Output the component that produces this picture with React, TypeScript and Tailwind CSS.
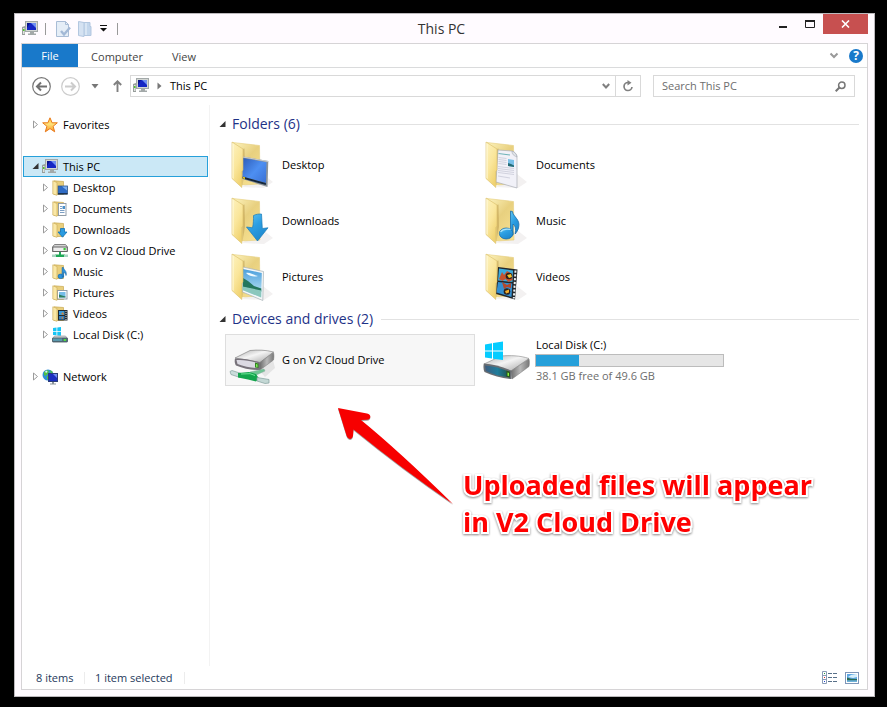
import type { ReactNode } from "react";

type Kind = "desktop" | "documents" | "downloads" | "music" | "pictures" | "videos";

function ComputerIcon() {
  return (
    <svg width="16" height="16" viewBox="0 0 16 16" aria-hidden="true">
      <path d="M3 0h13v11H3z" fill="#a3a9a9" />
      <path d="M4 1h11v9H4z" fill="#d3d7d4" />
      <rect x="5" y="2" width="9" height="7" fill="#1526c4" />
      <path d="M9 2h5v5z" fill="#6f8ff2" />
      <path d="M5 2h3L5 7z" fill="#08128a" />
      <path d="M8 11h4v1.500h2V14H6v-1.500h2z" fill="#a3a9a9" />
      <path d="M0 6l3-1v9H0z" fill="#989e9c" />
      <path d="M1 7h1.500v6H1z" fill="#dfe3df" />
      <rect x="1" y="8" width="1.500" height="2" fill="#4fc52c" />
    </svg>
  );
}

function StarIcon() {
  return (
    <svg width="16" height="16" viewBox="0 0 16 16" aria-hidden="true">
      <defs>
        <linearGradient id="star" x1="0" y1="0" x2="0" y2="1">
          <stop offset="0" stopColor="#ffc83a" />
          <stop offset="0.450" stopColor="#ffe27a" />
          <stop offset="1" stopColor="#f9951f" />
        </linearGradient>
      </defs>
      <path
        d="M8 .8l2.100 5h5.200l-4.200 3.500 1.600 5.500L8 11.600l-4.700 3.200 1.600-5.500L.7 5.800h5.200z"
        fill="url(#star)"
        stroke="#e8791a"
        strokeWidth="1"
        strokeLinejoin="round"
      />
    </svg>
  );
}

function NetworkIcon() {
  return (
    <svg width="16" height="16" viewBox="0 0 16 16" aria-hidden="true">
      <circle cx="6" cy="6" r="5.500" fill="#2f8fd8" />
      <path d="M2 3l3-2 2 1-1 3-3 2-1-1zM5 7l3 1-1 3-2-1zM8 1l3 2-2 2z" fill="#4fbf47" />
      <path d="M3 2.500L5 1.500 5.500 3 4 4z" fill="#d8f4fb" />
      <rect x="6.500" y="4.500" width="9" height="8" fill="#1a2fc0" stroke="#2b3d78" />
      <path d="M11 5h4v4z" fill="#6f8cf0" />
      <path d="M10 13h2v1.500h2v1H8v-1h2z" fill="#8a9399" />
    </svg>
  );
}

function CloudDriveSmall() {
  return (
    <svg width="16" height="16" viewBox="0 0 16 16" aria-hidden="true">
      <path d="M2.500 1.500h11l2 2.500v4.500h-15V4z" fill="#d3d3d3" stroke="#777" strokeWidth="0.900" />
      <path d="M.8 4h14.400v4.500H.8z" fill="#ededed" stroke="#666" strokeWidth="1" />
      <rect x="11.500" y="5" width="2.200" height="2.200" fill="#3acb3a" />
      <path d="M7 9h2v2.500h4V14H3v-2.500h4z" fill="#1fa957" />
      <path d="M0 11.500h4V14H0zM12 11.500h4V14h-4z" fill="#a9d4c2" />
    </svg>
  );
}

function LocalDiskSmall() {
  return (
    <svg width="16" height="16" viewBox="0 0 16 16" aria-hidden="true">
      <path d="M1 1l3.500-.5v3.500H1zM5.300.4L9 0v4H5.300zM1 4.800h3.500v3.500L1 8zM5.300 4.800H9v4l-3.700-.4z" fill="#16c5f5" />
      <path d="M2.500 9h11l2 2.500H.5z" fill="#cfd3d6" stroke="#8b8f92" strokeWidth="0.600" />
      <rect x="0.500" y="11" width="15" height="4" rx="0.500" fill="#54707c" stroke="#42555f" strokeWidth="0.800" />
      <path d="M1 11.500h9v2.500H1z" fill="#5a98ad" />
      <rect x="11.800" y="12" width="2.200" height="2" fill="#4de03e" />
    </svg>
  );
}

const smallOverlays: Record<Kind, ReactNode> = {
  desktop: (
    <>
      <rect x="6" y="6" width="9.500" height="8" fill="#2f6bc4" stroke="#345a88" strokeWidth="0.800" />
      <path d="M10 6.500h5v4z" fill="#7eb0ef" />
      <path d="M6 13h9.500v1.500H6z" fill="#1c3350" />
    </>
  ),
  documents: (
    <>
      <rect x="6.500" y="2.500" width="7.500" height="12" fill="#fff" stroke="#8795a3" strokeWidth="0.900" />
      <path d="M8 5.500h2M8 7.500h2M8 9.500h4.500M8 11.500h4.500" stroke="#6d94bd" strokeWidth="0.900" />
      <rect x="10.500" y="5" width="2.500" height="3" fill="#4b8fc9" />
    </>
  ),
  downloads: <path d="M8.500 6.500h4V10H15l-4.500 5.200L6 10h2.500z" fill="#2a9be0" stroke="#1272b8" strokeWidth="0.800" />,
  music: (
    <>
      <ellipse cx="8.800" cy="12.300" rx="2.800" ry="2.300" fill="#2d93de" stroke="#17649f" strokeWidth="0.600" />
      <path d="M10.100 12.500V3.500h1.300c.2 2.500 4 3.500 2.600 8-.2-2-1-2.600-2.400-3v4z" fill="#2d93de" stroke="#17649f" strokeWidth="0.600" />
    </>
  ),
  pictures: (
    <>
      <rect x="5.500" y="5.500" width="9.500" height="8.500" fill="#fff" stroke="#8795a3" strokeWidth="0.900" />
      <rect x="7" y="7" width="6.500" height="5.500" fill="#76bde8" />
      <path d="M7 12.500V9.500l3 1 3.500 1v1z" fill="#2c7f5e" />
    </>
  ),
  videos: (
    <>
      <rect x="6" y="4" width="9.500" height="10.500" fill="#222b33" />
      <rect x="7" y="5" width="5.500" height="4" fill="#3b9bd9" />
      <rect x="7" y="10" width="5.500" height="3.500" fill="#397fba" />
      <path d="M14 5v9" stroke="#d8e2ea" strokeDasharray="1 1" />
      <path d="M9 8l2-2 1 3zM9 12l2-1v2z" fill="#d98332" />
    </>
  ),
};

function FolderSmall({ kind }: { kind: Kind }) {
  return (
    <svg width="16" height="16" viewBox="0 0 16 16" aria-hidden="true">
      <path d="M2 .8l9.500.7v13H2z" fill="#e9cf7d" stroke="#c9a951" strokeWidth="0.700" />
      {smallOverlays[kind]}
      <path d="M.8.800L5 2.500v12.800L.8 14z" fill="#fae8a6" stroke="#cdb060" strokeWidth="0.700" />
    </svg>
  );
}

const largeOverlays: Record<Kind, ReactNode> = {
  desktop: (
    <>
      <path d="M14 15.500L39.300 20l-.8 26L13.500 38z" fill="#8d9499" />
      <path d="M14 17l23.500 4.200-.6 20.800L13.500 35.500z" fill="url(#screen)" />
      <path d="M13.500 35.500l23.400 6.500-.1 2L13.500 37.500z" fill="#14263b" />
      <path d="M14 35.700l2 .6v1.800l-2-.6z" fill="#e3c71e" />
      <path d="M14 15.500L39.300 20l-.1 1L14 16.600z" fill="#c9cdd0" />
    </>
  ),
  documents: (
    <>
      <path d="M15 9l14 1c3 1 5 3.500 5 6v31L13 41z" fill="#f1f1f8" stroke="#a9adb5" strokeWidth="0.700" />
      <path d="M29 10c0 2 0 4 5 6-.5-3-2-5-5-6z" fill="#dfe3e8" stroke="#9ca1aa" strokeWidth="0.500" />
      <path d="M15.500 12.500l11.500 1.500" stroke="#6fb3b8" strokeWidth="1.200" />
      <path
        d="M15.500 16.500l8 1M15.500 18.500l8 1M15.500 20.500l8 1M15.500 22.500l8 1M15 25.500l16 2M15 27.500l16 2M15 29.500l16 2M15 31.500l16 2M15 35l12 2"
        stroke="#c3c4d3"
        strokeWidth="0.700"
      />
      <path d="M25 18l6 1v7l-6-1z" fill="#79c0e8" />
      <path d="M25 25v-3l3 1 3 1.500V26z" fill="#266b74" />
    </>
  ),
  downloads: (
    <path
      d="M24.500 18.500c3-1.500 5.500-1.500 8-1.500l.8 14.500 5.700-.7L28.500 44 17.500 30l6 .8c1-4 1-8 1-12.300z"
      fill="url(#blue)"
      stroke="#197ab8"
      strokeWidth="0.700"
    />
  ),
  music: (
    <>
      <path d="M27.500 37V14l2 .6c.5 5 8 8 6.200 15.400-.5 3-2 5-3.500 7 .8-5 .5-8-2.200-10v11z" fill="url(#blue)" stroke="#1a6caa" strokeWidth="0.800" />
      <ellipse cx="23.200" cy="36.500" rx="6.800" ry="5.500" fill="url(#blue)" stroke="#1a6caa" strokeWidth="0.800" />
      <path d="M17.500 35c3-4 7-3 10-2.500" stroke="#a9e3fa" strokeWidth="1.200" fill="none" />
    </>
  ),
  pictures: (
    <>
      <path d="M14 14l20.500 4.500-.7 29L13.500 39z" fill="#f5f8f9" stroke="#a5b0b5" strokeWidth="0.700" />
      <path d="M14 16l18.800 4-.6 24.500L13.500 37z" fill="url(#sky)" />
      <path d="M14 25l5 3 6 5 7.300 2.500v3L14 34z" fill="#24765d" />
      <path d="M13.500 33.500l18.800 4-.1 7L13.500 37z" fill="#8bc7bd" />
      <path d="M17 20c4-1 7 2 12 3-3 1-8 1-12-3z" fill="#effaff" />
    </>
  ),
  videos: (
    <>
      <path d="M15 14l19.500 2.500L32 46.500 13 41z" fill="#22262a" />
      <path d="M16 15.500l14 2-.5 11.500L15 27.500z" fill="#3cabdd" />
      <path d="M15 29l14.300 1.500L28.500 44 13.500 39.500z" fill="#348fd0" />
      <path d="M16 26l3-7 2 3 3-4 5 3 .5 6-4 2-3-3-3 2z" fill="#c6522d" />
      <circle cx="26" cy="23" r="3.300" fill="#2d211d" />
      <path d="M24 22l4-1 1 3-3 1z" fill="#f4c42b" />
      <path d="M19 29l5 3 4-2v5l-4-1-3 2z" fill="#b5482b" />
      <circle cx="24" cy="38.500" r="3.300" fill="#2d211d" />
      <path d="M22 38l4-1.500v3l-3 1z" fill="#f0ad2b" />
      <path d="M32.500 17.500L30.800 45.500" stroke="#eef1f2" strokeWidth="2" strokeDasharray="2.200 1.600" />
    </>
  ),
};

function FolderLarge({ kind }: { kind: Kind }) {
  return (
    <svg className="shrink-0" width="48" height="48" viewBox="0 0 48 48" aria-hidden="true">
      <path d="M13 46l22 1 9-6-10-8z" fill="#f3f1f1" />
      <path d="M4 1.500L30.500 4.500 31 43l-18 1z" fill="url(#back)" stroke="#e6cf7e" strokeWidth="0.600" />
      <path d="M13.500 8l2-.5L16 30l-2.500 14z" fill="#b99a4c" opacity="0.500" />
      {largeOverlays[kind]}
      <path d="M3 1l11 7v21l-1.200 1.500v16L3 37.500z" fill="url(#flap)" stroke="#d9bd68" strokeWidth="0.600" />
      <path d="M3.500 2v35l1 1V3z" fill="#fffbe0" />
    </svg>
  );
}

function IconGradients() {
  return (
    <svg className="absolute" width="0" height="0" aria-hidden="true">
      <defs>
        <linearGradient id="back" x1="0" y1="0" x2="0.700" y2="1">
          <stop offset="0" stopColor="#fdf3bd" />
          <stop offset="0.500" stopColor="#e8d07f" />
          <stop offset="1" stopColor="#f6df8f" />
        </linearGradient>
        <linearGradient id="flap" x1="0" y1="0" x2="0.600" y2="1">
          <stop offset="0" stopColor="#fdf2bf" />
          <stop offset="0.550" stopColor="#fae69b" />
          <stop offset="1" stopColor="#f0d270" />
        </linearGradient>
        <linearGradient id="screen" x1="0" y1="0" x2="1" y2="0.900">
          <stop offset="0" stopColor="#2e5db8" />
          <stop offset="0.550" stopColor="#4d8ff2" />
          <stop offset="1" stopColor="#3c73d6" />
        </linearGradient>
        <linearGradient id="blue" x1="0" y1="0" x2="0.600" y2="1">
          <stop offset="0" stopColor="#5fc6f2" />
          <stop offset="0.500" stopColor="#2c9ee2" />
          <stop offset="1" stopColor="#1e88cd" />
        </linearGradient>
        <linearGradient id="sky" x1="0" y1="0" x2="0" y2="1">
          <stop offset="0" stopColor="#4b9fdd" />
          <stop offset="1" stopColor="#c8ebf6" />
        </linearGradient>
        <linearGradient id="metal" x1="0" y1="0" x2="1" y2="1">
          <stop offset="0" stopColor="#a9a9a9" />
          <stop offset="0.450" stopColor="#f4f4f4" />
          <stop offset="1" stopColor="#a2a2a2" />
        </linearGradient>
        <linearGradient id="side" x1="0" y1="0" x2="1" y2="0">
          <stop offset="0" stopColor="#6f6f6f" />
          <stop offset="0.500" stopColor="#b9b9b9" />
          <stop offset="1" stopColor="#777" />
        </linearGradient>
        <linearGradient id="teal" x1="0" y1="0" x2="1" y2="0">
          <stop offset="0" stopColor="#3f5d80" />
          <stop offset="0.500" stopColor="#1f7d9c" />
          <stop offset="1" stopColor="#215147" />
        </linearGradient>
      </defs>
    </svg>
  );
}

function CloudDriveLarge() {
  return (
    <svg className="shrink-0" width="48" height="48" viewBox="0 0 48 48" aria-hidden="true">
      <path d="M30 34l14-10 2 8-10 9z" fill="#e4e4e4" />
      <path d="M6 22l15-7.500c8-.8 16-.5 23.500 1.500L31 26.500z" fill="url(#metal)" stroke="#777" strokeWidth="0.600" />
      <path d="M31 26.500L44.500 16.500c.6 2.500.5 5 0 7.500L31 34z" fill="url(#side)" stroke="#777" strokeWidth="0.500" />
      <path d="M6 22.500c8-.5 16 1 25 4V34c-8 0-16-1-24-4.500-1.500-2-1.500-5-1-7z" fill="#77727a" />
      <path d="M7.500 24c7-.5 14 .8 21.500 3.200v4.800c-7-.2-14-1.500-20.500-4z" fill="#dbd9e2" />
      <path d="M26 26.500l3.500 1v4.500l-3.500-.4z" fill="#34811f" />
      <path d="M27 28l1.500.4v2.500l-1.500-.2z" fill="#7df25c" />
      <path d="M21 36l14-3 1 2-11 5z" fill="#6fc493" stroke="#84a99b" strokeWidth="0.500" />
      <path d="M1 35.500l2-1 9 3-1 4-9-3z" fill="#c9dcda" stroke="#839f9c" strokeWidth="0.700" />
      <path d="M9 37l11-1 7 2 3 4.500-3 3-8-2-10-2z" fill="#12a54c" />
      <path d="M12 38l9-.3 5 1.800" stroke="#6be595" fill="none" />
      <path d="M28 41.500l12 2v3.500l-4 .5-8-2.500z" fill="#c4d8d5" stroke="#839f9c" strokeWidth="0.700" />
    </svg>
  );
}

function LocalDiskLarge() {
  return (
    <svg className="shrink-0" width="48" height="48" viewBox="0 0 48 48" aria-hidden="true">
      <path d="M1 28l17-8c9-.8 19-.5 28 2.500L28 35z" fill="url(#metal)" stroke="#8a8a8a" strokeWidth="0.600" />
      <path d="M28 35l18-12c.6 2.500.5 5 0 7.500L29 43z" fill="url(#side)" stroke="#777" strokeWidth="0.500" />
      <path d="M.8 27.500c9 .5 18 3 27.700 7.200V43C19 42.500 10 40 1.500 36 .3 33.500.3 30 .8 27.500z" fill="#696d72" />
      <path d="M2 29.500c8 .7 16 2.800 25 6.500v5.500C18 40.500 10 38.500 2.800 35z" fill="url(#teal)" />
      <path d="M23.500 34.500l3.500 1.200v5.700l-3.500-.6z" fill="#2d531f" />
      <path d="M24.500 36.500l1.500.5v3l-1.500-.3z" fill="#86f53f" />
      <path d="M2 8.500L9 7.200v7.300H2zM10 7l10-1.500v9H10zM2 15.500h7v7l-7-1zM10 15.500h10V24l-10-1.300z" fill="#05ccff" />
    </svg>
  );
}

function Collapsed() {
  return (
    <svg className="shrink-0" width="7" height="9" viewBox="0 0 7 9" aria-hidden="true">
      <path d="M1.500 1v7L5.500 4.500z" fill="#fff" stroke="#9c9c9c" />
    </svg>
  );
}

function Expanded() {
  return (
    <svg className="shrink-0" width="7" height="9" viewBox="0 0 7 9" aria-hidden="true">
      <path d="M6.500 1v6H.5z" fill="#333" />
    </svg>
  );
}

function TreeItem({
  label,
  icon,
  nested = false,
  selected = false,
}: {
  label: string;
  icon: ReactNode;
  nested?: boolean;
  selected?: boolean;
}) {
  return (
    <li>
      <button
        type="button"
        className={`flex h-[21px] w-full items-center gap-[3px] border text-left whitespace-nowrap ${nested ? "pl-[18px]" : "pl-2"} ${
          selected ? "border-[#26a0da] bg-[#cbe8f6]" : "border-transparent"
        }`}
      >
        {selected ? <Expanded /> : <Collapsed />}
        {icon}
        <span className="pl-0.5">{label}</span>
      </button>
    </li>
  );
}

function GroupHeading({ children }: { children: ReactNode }) {
  return (
    <div className="flex h-5 items-center gap-1.5 pl-[9px]">
      <Expanded />
      <h2 className="pr-0.5 text-sm text-[#1e3287]">{children}</h2>
      <div className="h-px flex-1 bg-[#e2e2e2]" />
    </div>
  );
}

function Tile({ label, icon }: { label: string; icon: ReactNode }) {
  return (
    <button type="button" className="flex h-[52px] items-center gap-1 border border-transparent px-[3px] text-left">
      {icon}
      <span className="pl-px">{label}</span>
    </button>
  );
}

const folders: { label: string; kind: Kind }[] = [
  { label: "Desktop", kind: "desktop" },
  { label: "Documents", kind: "documents" },
  { label: "Downloads", kind: "downloads" },
  { label: "Music", kind: "music" },
  { label: "Pictures", kind: "pictures" },
  { label: "Videos", kind: "videos" },
];

function TitleBar() {
  return (
    <header className="grid h-[29px] grid-cols-[1fr_auto_1fr] items-start pr-1.5">
      <div className="flex h-[29px] items-center gap-[7px] pl-[7px]">
        <ComputerIcon />
        <span className="h-3 w-px bg-[#999]" />
        <button type="button" aria-label="Properties" className="ml-0.5">
          <svg width="16" height="16" viewBox="0 0 16 16" aria-hidden="true">
            <path d="M1.500.5h9l3 3v12h-12z" fill="#e5edf7" stroke="#a9bcd6" />
            <path d="M10.500.5v3h3" fill="none" stroke="#a9bcd6" />
            <path d="M6 10l3 3.500 6-7" fill="none" stroke="#a3b8d6" strokeWidth="2.400" />
          </svg>
        </button>
        <button type="button" aria-label="New folder">
          <svg width="14" height="16" viewBox="0 0 14 16" aria-hidden="true">
            <path d="M4 1.500h8v4h1v9H4z" fill="#c3d6ec" stroke="#b3c7e0" />
            <path d="M.5.5L6 1.500v14l-5.500-1z" fill="#d5e2f2" stroke="#b3c7e0" />
            <path d="M8 2v12" stroke="#eef4fb" />
          </svg>
        </button>
        <button type="button" aria-label="Customize Quick Access Toolbar">
          <svg width="9" height="7" viewBox="0 0 9 7" aria-hidden="true">
            <path d="M1 0h7v1H1zM1 3h7L4.500 6.500z" fill="#111" />
          </svg>
        </button>
        <span className="ml-0.5 h-3 w-px bg-[#999]" />
      </div>
      <h1 className="text-sm leading-[29px] text-[#333]">This PC</h1>
      <div className="flex items-start justify-end">
        <button type="button" aria-label="Minimize" className="h-5 w-[26px]">
          <svg width="26" height="20" viewBox="0 0 26 20" aria-hidden="true">
            <path d="M8 12h8v2H8z" fill="#222" />
          </svg>
        </button>
        <button type="button" aria-label="Maximize" className="h-5 w-[26px]">
          <svg width="26" height="20" viewBox="0 0 26 20" aria-hidden="true">
            <path d="M8.500 7h9v6.500h-9z" fill="none" stroke="#222" />
            <path d="M8 6h10v2H8z" fill="#222" />
          </svg>
        </button>
        <button type="button" aria-label="Close" className="flex h-5 w-[45px] items-center justify-center bg-[#c75050]">
          <svg width="9" height="8" viewBox="0 0 9 8" aria-hidden="true">
            <path d="M1 .5l7 7M8 .5l-7 7" stroke="#fff" strokeWidth="1.600" />
          </svg>
        </button>
      </div>
    </header>
  );
}

function Ribbon() {
  return (
    <nav className="flex h-6 border-b border-[#dadbdc] text-[#444]">
      <button type="button" className="w-14 bg-[#1979ca] text-white">
        File
      </button>
      <button type="button" className="w-[78px] pt-0.5">
        Computer
      </button>
      <button type="button" className="w-14 pt-0.5">
        View
      </button>
      <div className="ml-auto flex items-center gap-2.5 pr-1">
        <button type="button" aria-label="Expand the ribbon">
          <svg width="10" height="7" viewBox="0 0 10 7" aria-hidden="true">
            <path d="M1.500 1.500L5 5l3.500-3.500" fill="none" stroke="#999" strokeWidth="2" />
          </svg>
        </button>
        <button
          type="button"
          aria-label="Help"
          className="flex size-3.5 items-center justify-center rounded-full bg-[#1979ca] text-xs leading-none font-bold text-white"
        >
          ?
        </button>
      </div>
    </nav>
  );
}

function AddressRow() {
  return (
    <div className="flex h-[37px] items-start pt-[7px] pr-3">
      <div className="flex h-[22px] w-[108px] shrink-0 items-center pl-[9px]">
        <button type="button" aria-label="Back">
          <svg width="21" height="21" viewBox="0 0 21 21" aria-hidden="true">
            <circle cx="10.500" cy="10.500" r="8.800" fill="none" stroke="#777" strokeWidth="1.200" />
            <path d="M16 10.500H6.500M10 6.500l-4 4 4 4" fill="none" stroke="#707070" strokeWidth="2" />
          </svg>
        </button>
        <button type="button" aria-label="Forward" className="ml-2">
          <svg width="21" height="21" viewBox="0 0 21 21" aria-hidden="true">
            <circle cx="10.500" cy="10.500" r="8.800" fill="none" stroke="#ccc" strokeWidth="1.200" />
            <path d="M5 10.500h9.500M11 6.500l4 4-4 4" fill="none" stroke="#ccc" strokeWidth="2" />
          </svg>
        </button>
        <button type="button" aria-label="Recent locations" className="ml-2.5">
          <svg width="8" height="5" viewBox="0 0 8 5" aria-hidden="true">
            <path d="M.5 0h7L4 4.500z" fill="#777" />
          </svg>
        </button>
        <button type="button" aria-label="Up" className="ml-3.5">
          <svg width="9" height="12" viewBox="0 0 9 12" aria-hidden="true">
            <path d="M4.500 12V1.500M.8 5l3.700-3.700L8.200 5" fill="none" stroke="#808080" strokeWidth="1.900" />
          </svg>
        </button>
      </div>
      <div className="flex h-[22px] flex-1 items-stretch border border-[#d9d9d9]">
        <div className="flex flex-1 items-center pl-0.5">
          <ComputerIcon />
          <svg className="mx-2" width="5" height="8" viewBox="0 0 5 8" aria-hidden="true">
            <path d="M.5.5v7l4-3.500z" fill="#777" />
          </svg>
          <button type="button">This PC</button>
        </div>
        <button type="button" aria-label="Previous locations" className="pr-[5px]">
          <svg width="8" height="6" viewBox="0 0 8 6" aria-hidden="true">
            <path d="M.8 1L4 4.500 7.200 1" fill="none" stroke="#808080" strokeWidth="2" />
          </svg>
        </button>
        <button type="button" aria-label="Refresh" className="flex w-[25px] items-center justify-center border-l border-[#d9d9d9]">
          <svg width="12" height="12" viewBox="0 0 12 12" aria-hidden="true">
            <path d="M6 2.500A4 4 0 1 0 10 7" fill="none" stroke="#808080" strokeWidth="1.700" />
            <path d="M5.500 0L9.500 2.800 5.500 5.500z" fill="#808080" />
          </svg>
        </button>
      </div>
      <label className="ml-3 flex h-[22px] w-[202px] items-center border border-[#d9d9d9] pr-2 pl-2">
        <input
          type="search"
          aria-label="Search This PC"
          placeholder="Search This PC"
          className="min-w-0 flex-1 outline-none placeholder:text-[#6d6d6d]"
        />
        <svg width="11" height="11" viewBox="0 0 11 11" aria-hidden="true">
          <circle cx="6.800" cy="4.200" r="3.200" fill="none" stroke="#777" strokeWidth="1.500" />
          <path d="M4.500 6.500L.7 10.300" stroke="#777" strokeWidth="2" />
        </svg>
      </label>
    </div>
  );
}

function Sidebar() {
  return (
    <aside className="w-[188px] shrink-0 border-r border-[#f3f3f3] px-px pt-[9px]">
      <ul>
        <TreeItem label="Favorites" icon={<StarIcon />} />
      </ul>
      <ul className="pt-[21px]">
        <TreeItem label="This PC" icon={<ComputerIcon />} selected />
        <TreeItem label="Desktop" icon={<FolderSmall kind="desktop" />} nested />
        <TreeItem label="Documents" icon={<FolderSmall kind="documents" />} nested />
        <TreeItem label="Downloads" icon={<FolderSmall kind="downloads" />} nested />
        <TreeItem label="G on V2 Cloud Drive" icon={<CloudDriveSmall />} nested />
        <TreeItem label="Music" icon={<FolderSmall kind="music" />} nested />
        <TreeItem label="Pictures" icon={<FolderSmall kind="pictures" />} nested />
        <TreeItem label="Videos" icon={<FolderSmall kind="videos" />} nested />
        <TreeItem label="Local Disk (C:)" icon={<LocalDiskSmall />} nested />
      </ul>
      <ul className="pt-[21px]">
        <TreeItem label="Network" icon={<NetworkIcon />} />
      </ul>
    </aside>
  );
}

const arrow = "M1 1l29 5.500c4.500.8 4.500 6 0 6.200L24 13Q62 44 116 97 65 62 16.500 22.500l-.5 6c-.5 4.500-5 4.500-6.500 0z";

function Callout() {
  return (
    <>
      <svg className="absolute top-[302px] left-[127px]" width="118" height="100" viewBox="0 0 118 100" aria-hidden="true">
        <path d={arrow} transform="translate(0 1)" fill="#777" opacity="0.700" />
        <path d={arrow} fill="#f70000" />
      </svg>
      <p className="absolute top-[361px] left-[253px] font-['Open_Sans',sans-serif] text-[27px] leading-[37px] font-bold whitespace-nowrap text-[#ff0000] drop-shadow-[0_1px_1px_#888] [-webkit-text-stroke:4px_white] [paint-order:stroke_fill]">
        Uploaded files will appear
        <br />
        in V2 Cloud Drive
      </p>
    </>
  );
}

function StatusBar() {
  return (
    <footer className="flex h-[23px] items-center pr-2 pl-3.5 text-[#1e395b]">
      <span className="w-12">8 items</span>
      <span className="h-3 w-px bg-[#ececec]" />
      <span className="w-[99px] pl-2.5">1 item selected</span>
      <span className="h-3 w-px bg-[#ececec]" />
      <div className="ml-auto flex items-center gap-2">
        <button type="button" aria-label="Details view">
          <svg width="15" height="13" viewBox="0 0 15 13" aria-hidden="true">
            <path d="M.5.5h4v12h-4zM.5 4.500h4M.5 8.500h4" fill="#fff" stroke="#8a9cb5" />
            <path d="M2 2h1v1H2z" fill="#2a9a3a" />
            <path d="M2 6h1v1H2z" fill="#d22" />
            <path d="M2 10h1v1H2z" fill="#2346d0" />
            <path d="M6 2.500h4M11 2.500h4M6 6.500h4M11 6.500h4M6 10.500h4M11 10.500h4" stroke="#587089" />
          </svg>
        </button>
        <button type="button" aria-label="Large icons view">
          <svg width="14" height="12" viewBox="0 0 14 12" aria-hidden="true">
            <rect x="0.500" y="0.500" width="13" height="11" fill="#fff" stroke="#7f96b8" />
            <rect x="2" y="2" width="10" height="8" fill="#5fa8e4" />
            <path d="M3 5l3-2 5-1h1v3L8 6z" fill="#d7effb" />
            <path d="M2 5.500l4 1.200 6 .3v1.500H2z" fill="#2b6a54" />
            <path d="M2 8.500h10V10H2z" fill="#6fb2d8" />
          </svg>
        </button>
      </div>
    </footer>
  );
}

export default function App() {
  return (
    <div className="flex min-h-screen flex-col bg-black pt-[13px] pr-3 pb-2.5 pl-3.5 font-['Open_Sans','Noto_Sans',sans-serif] text-[11px] leading-4 text-black">
      <IconGradients />
      <div className="flex flex-1 flex-col border border-[#bcb9bc] bg-[#fffbff]">
        <TitleBar />
        <div className="mx-1.5 mb-1.5 flex flex-1 flex-col border border-[#d6d4d6] bg-white">
          <Ribbon />
          <AddressRow />
          <div className="flex flex-1">
            <Sidebar />
            <main className="relative flex-1 pt-[9px] pr-2">
              <GroupHeading>Folders (6)</GroupHeading>
              <div className="grid grid-cols-[250px_250px] gap-1 pt-[5px] pb-1.5 pl-[15px]">
                {folders.map((folder) => (
                  <Tile key={folder.label} label={folder.label} icon={<FolderLarge kind={folder.kind} />} />
                ))}
              </div>
              <GroupHeading>Devices and drives (2)</GroupHeading>
              <div className="grid grid-cols-[250px_250px] gap-1 pt-[5px] pl-[15px]">
                <button type="button" className="flex h-[52px] items-center gap-1 border border-[#dedede] bg-[#f7f7f7] px-[3px] text-left">
                  <CloudDriveLarge />
                  <span className="pl-px">G on V2 Cloud Drive</span>
                </button>
                <button type="button" className="flex h-[52px] items-center gap-1 border border-transparent px-[3px] text-left">
                  <LocalDiskLarge />
                  <span className="flex w-[189px] flex-col">
                    <span className="mb-px pl-px">Local Disk (C:)</span>
                    <span
                      role="meter"
                      aria-label="Space used"
                      aria-valuemin={0}
                      aria-valuemax={50}
                      aria-valuenow={12}
                      className="mb-px block h-[13px] border border-[#bcbcbc] bg-[#e6e6e6]"
                    >
                      <span className="block h-full w-[23%] bg-[#26a0da]" />
                    </span>
                    <span className="pl-px text-[#6d6d6d]">38.1 GB free of 49.6 GB</span>
                  </span>
                </button>
              </div>
              <Callout />
            </main>
          </div>
          <StatusBar />
        </div>
      </div>
    </div>
  );
}
